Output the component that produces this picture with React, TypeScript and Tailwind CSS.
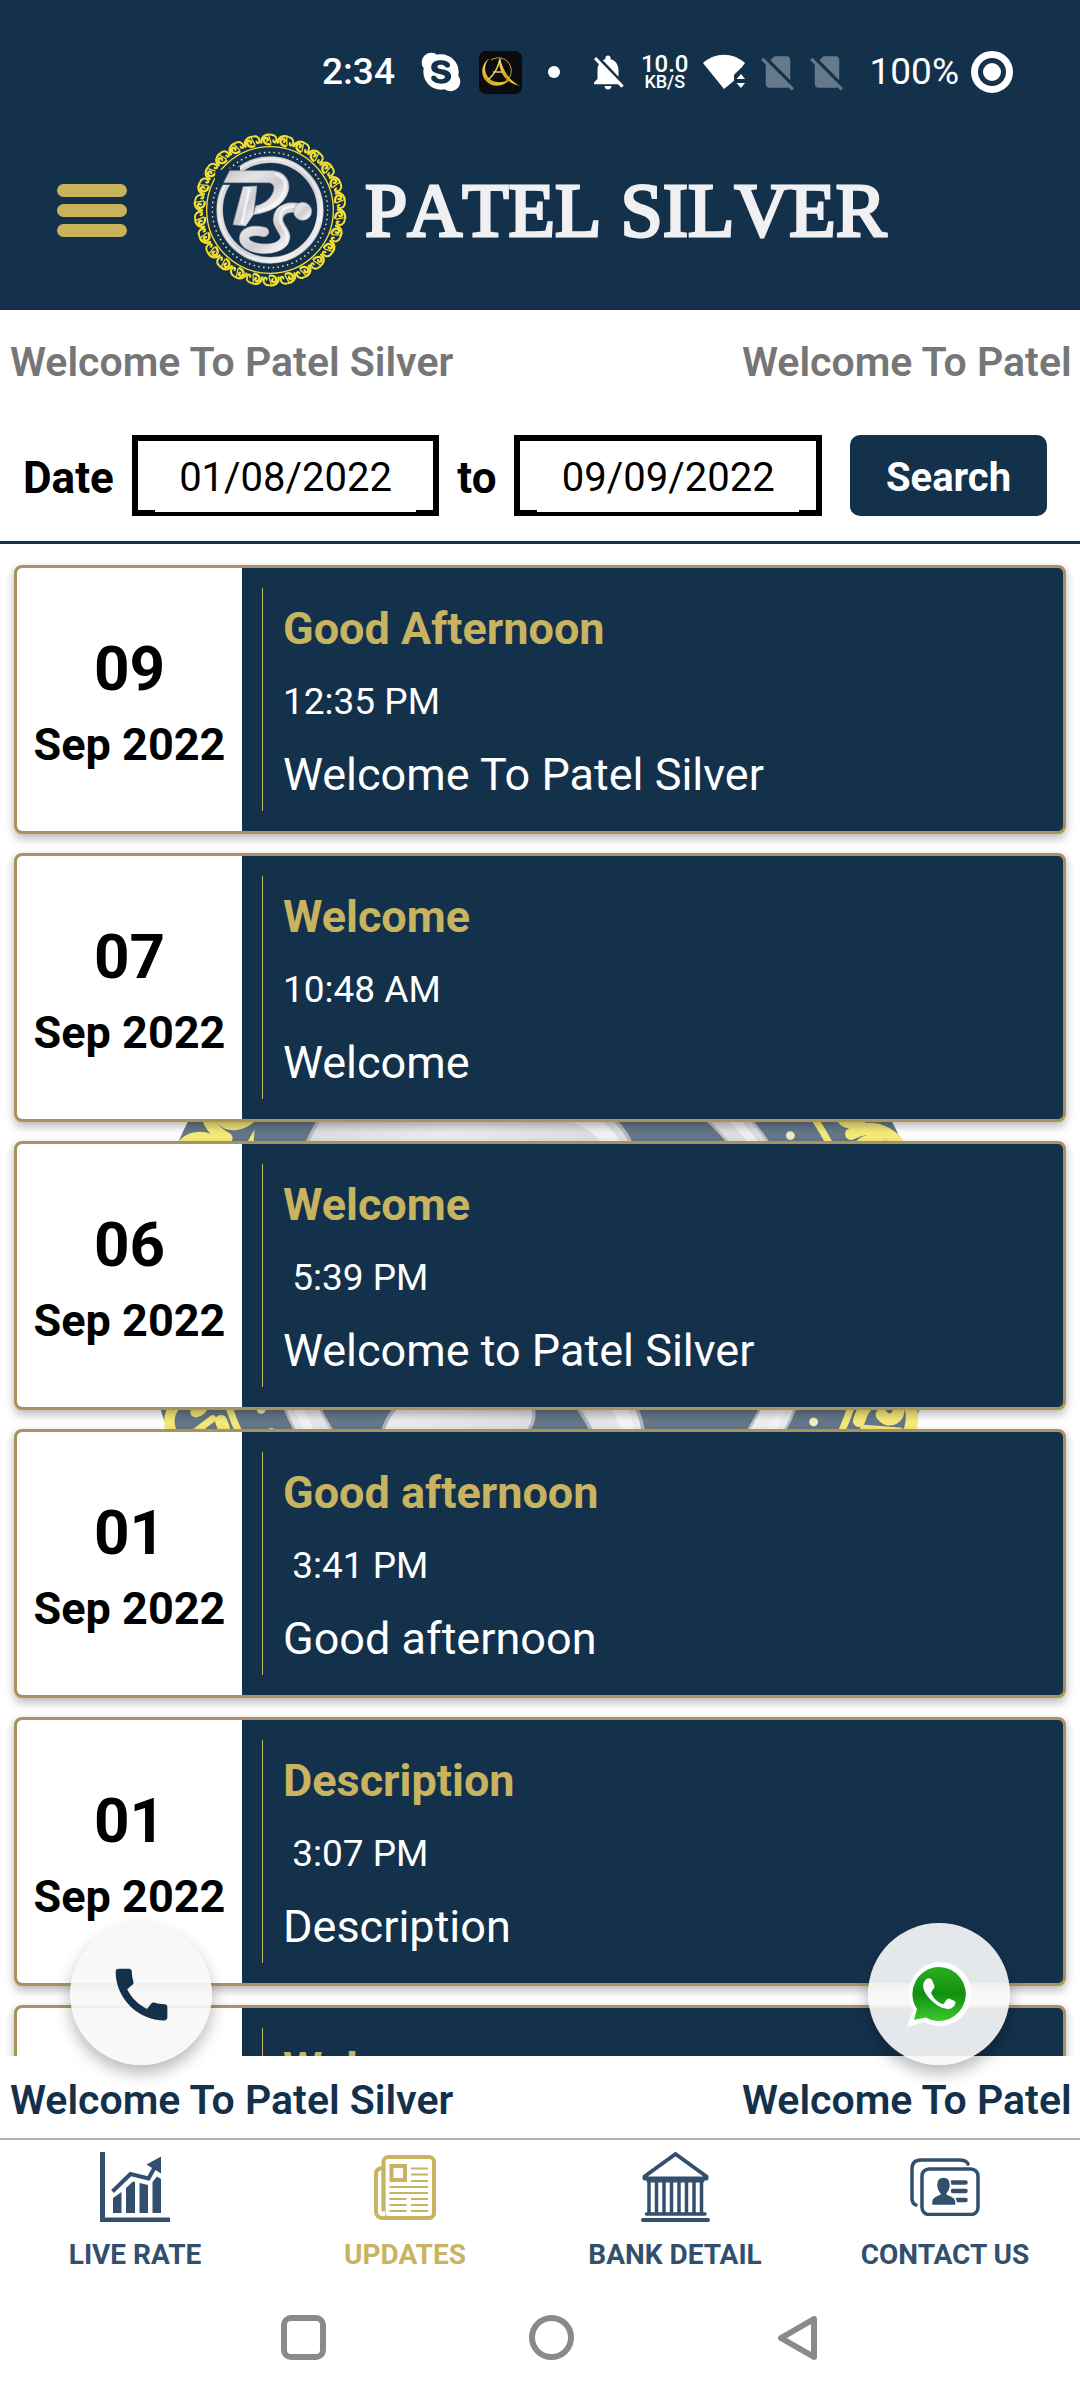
import { MdCall, MdNotificationsOff, MdSignalCellularNoSim } from "react-icons/md";
import { FaSkype } from "react-icons/fa";

type Update = { day: string; month: string; title: string; time: string; body: string };

const updates: Update[] = [
  { day: "09", month: "Sep 2022", title: "Good Afternoon", time: "12:35 PM", body: "Welcome To Patel Silver" },
  { day: "07", month: "Sep 2022", title: "Welcome", time: "10:48 AM", body: "Welcome" },
  { day: "06", month: "Sep 2022", title: "Welcome", time: " 5:39 PM", body: "Welcome to Patel Silver" },
  { day: "01", month: "Sep 2022", title: "Good afternoon", time: " 3:41 PM", body: "Good afternoon" },
  { day: "01", month: "Sep 2022", title: "Description", time: " 3:07 PM", body: "Description" },
  { day: "01", month: "Sep 2022", title: "Welcome", time: " 2:50 PM", body: "Welcome" },
];

function Emblem({ id, className }: { id: string; className: string }) {
  const turns = Array.from({ length: 26 }, (_, i) => (i * 360) / 26);
  const silver = `url(#${id}-silver)`;
  return (
    <svg viewBox="-231 -231 462 462" className={className} aria-hidden="true">
      <defs>
        <linearGradient id={`${id}-silver`} x1="0" y1="0" x2="1" y2="1">
          <stop offset="0" stopColor="#c4c4c8" />
          <stop offset="0.3" stopColor="#e4e4e7" />
          <stop offset="0.55" stopColor="#cdcdd1" />
          <stop offset="0.8" stopColor="#f1f1f3" />
          <stop offset="1" stopColor="#b4b4b9" />
        </linearGradient>
      </defs>
      <circle r="228" fill="#14314c" />
      <g fill="none" stroke="#f3df34" strokeLinecap="round">
        {turns.map((a) => (
          <g key={a} transform={`rotate(${a})`}>
            <path strokeWidth="7" d="M0 -197C-16 -196 -22 -207 -17 -214C-11 -220 -4 -214 -8 -208" />
            <path strokeWidth="7" d="M-26 -202C-28 -219 -14 -228 -1 -226" />
            <path strokeWidth="6" d="M4 -226C16 -226 22 -216 18 -206C14 -200 9 -204 10 -209" />
            <path strokeWidth="4" d="M-3 -221L3 -201" />
          </g>
        ))}
        <circle r="190" strokeWidth="4" />
      </g>
      <circle r="173" fill="none" stroke="#ebe3a4" strokeWidth="5" strokeLinecap="round" strokeDasharray="0.1 14.4" />
      <circle r="151" fill="none" stroke="#9b9da3" strokeWidth="20" />
      <circle r="151" fill="none" stroke={silver} strokeWidth="17" />
      <circle r="153" fill="none" stroke="#f2f2f4" strokeWidth="5" opacity="0.8" />
      <path fill="#14314c" d="M-164 -118L-90 -130L-90 -76L-166 -76Z" />
      <g fill={silver} stroke="#96989e" strokeWidth="2">
        <path d="M-121 -118H9C49 -114 62 -84 55 -56C43 -15 0 8 -50 14L-43 -12C-10 -20 10 -42 12 -65C12 -77 4 -82 -6 -82H-139Z" />
        <path d="M-81 -70L-39 -72L-50 14L-73 48L-111 44Z" />
      </g>
      <path fill="none" stroke="#f6f6f8" strokeWidth="9" strokeLinecap="round" opacity="0.8" d="M18 -108C44 -98 50 -80 44 -60C32 -26 4 -6 -34 3M-62 -64L-84 38" />
      <g fill="none" strokeLinecap="round">
        <path stroke="#8e9096" strokeWidth="31" d="M98 -2C62 -14 26 -6 24 28C24 54 56 68 42 94C20 126 -62 122 -76 92C-84 66 -54 58 -18 66" />
        <path stroke={silver} strokeWidth="27" d="M98 -2C62 -14 26 -6 24 28C24 54 56 68 42 94C20 126 -62 122 -76 92C-84 66 -54 58 -18 66" />
        <path stroke="#f6f6f8" strokeWidth="8" opacity="0.8" d="M80 -9C50 -14 31 -4 30 28C32 52 60 66 48 94" />
      </g>
      <circle cx="98" cy="4" r="27" fill={silver} stroke="#96989e" strokeWidth="2" />
    </svg>
  );
}

function StatusBar() {
  return (
    <div className="flex h-11 items-center justify-end pr-[67px] text-white">
      <span className="text-[37px] leading-[44px] font-medium">2:34</span>
      <FaSkype size={44} className="ml-6" />
      <svg viewBox="0 0 43 43" className="ml-4 size-[43px]" aria-hidden="true">
        <defs>
          <linearGradient id="gold" x1="0" y1="0" x2="1" y2="1">
            <stop offset="0" stopColor="#f5e27a" />
            <stop offset="0.5" stopColor="#d2a21c" />
            <stop offset="1" stopColor="#f8d840" />
          </linearGradient>
        </defs>
        <rect width="43" height="43" rx="7" fill="#0b0a0c" />
        <path fill="url(#gold)" d="M11 7C2 12 1 24 7 30C13 37 25 36 31 28C23 33 13 32 9 26C4 19 6 11 11 7Z" />
        <path fill="none" stroke="#c9a53a" strokeWidth="1" d="M12 9C20 4 30 8 32 17C33 24 30 28 27 30" />
        <path fill="none" stroke="#e5cf6a" strokeWidth="1.5" d="M21 8C19 17 15 24 9 29M14 21H25" />
        <path fill="url(#gold)" d="M21 7C24 20 30 29 41 35C30 33 21 25 20 11Z" />
      </svg>
      <span className="ml-[26px] size-3 rounded-full bg-white" />
      <MdNotificationsOff size={42} className="ml-[27px]" />
      <span className="ml-3 flex flex-col items-center font-medium">
        <span className="text-[24px] leading-[20px]">10.0</span>
        <span className="text-[18px] leading-[16px]">KB/S</span>
      </span>
      <svg viewBox="0 0 42 36" className="ml-[14px] h-9 w-[42px]" fill="#fff" aria-hidden="true">
        <path d="M0 9C12 -2 30 -2 42 9L36 17L32 20V26L21 35Z" />
        <path fill="#14314c" d="M38 14L31 21V36H42V14Z" />
        <path d="M38 20L42 25H33.500Z M33.500 29H42L38 34Z" />
      </svg>
      <MdSignalCellularNoSim size={42} className="ml-3 opacity-35" />
      <MdSignalCellularNoSim size={42} className="ml-[7px] opacity-35" />
      <span className="ml-[22px] text-[37px] leading-[44px]">100%</span>
      <svg viewBox="0 0 42 42" className="ml-3 size-[42px]" aria-hidden="true">
        <circle cx="21" cy="21" r="17.500" fill="none" stroke="#fff" strokeWidth="7" />
        <circle cx="21" cy="21" r="9" fill="#fff" />
      </svg>
    </div>
  );
}

function Ticker({ className }: { className: string }) {
  return (
    <div className={`flex shrink-0 items-center overflow-hidden pl-[10px] text-[41px] leading-[48px] font-semibold whitespace-nowrap ${className}`}>
      <span className="w-[732px] shrink-0">Welcome To Patel Silver</span>
      <span>Welcome To Patel Silver</span>
    </div>
  );
}

function DateField({ label, value }: { label: string; value: string }) {
  return (
    <div className="flex min-w-0 flex-1 border-[6px] border-black px-[17px]">
      <input
        aria-label={label}
        defaultValue={value}
        className="h-[69px] w-full min-w-0 bg-white pt-1 text-center text-[40px] text-black shadow-[0_2px_0_#fff] outline-none"
      />
    </div>
  );
}

function UpdateCard({ day, month, title, time, body }: Update) {
  return (
    <li className="flex shrink-0 overflow-hidden rounded-lg border-[3px] border-[#a8935c] bg-[#14314c] shadow-[0_4px_10px_rgba(0,0,0,0.3)]">
      <div className="flex w-[225px] shrink-0 flex-col items-center justify-center gap-1 bg-white pt-[14px] font-bold text-black">
        <span className="text-[62px] leading-[72px]">{day}</span>
        <span className="text-[45px] leading-[72px]">{month}</span>
      </div>
      <div className="my-5 ml-5 min-w-0 flex-1 border-l border-[#c8b560] pt-1 pl-5 leading-[73px] text-white">
        <h2 className="text-[45px] font-bold text-[#c8b361]">{title}</h2>
        <p className="text-[37px] whitespace-pre">{time}</p>
        <p className="text-[45px]">{body}</p>
      </div>
    </li>
  );
}

function LiveRateIcon() {
  return (
    <svg viewBox="0 0 70 70" className="size-[70px]" fill="currentColor" aria-hidden="true">
      <path d="M0 0H5V65.500H70V70H0Z" />
      <path d="M13 46L21.500 40V61H13ZM26 36L33 29.500L35 30V61H26ZM39.500 31L48 33V61H39.500ZM52.500 30L57 24.500L61 27V61H52.500Z" />
      <path fill="none" stroke="currentColor" strokeWidth="4" d="M12.500 39.500L30.500 22L48.500 26.500L56 13" />
      <path d="M61 4.500V21.500L46.500 12.500Z" />
    </svg>
  );
}

function UpdatesIcon() {
  return (
    <svg viewBox="0 0 62 65" className="h-[65px] w-[62px]" fill="none" stroke="currentColor" aria-hidden="true">
      <rect x="9.500" y="2" width="50.500" height="61" rx="5" strokeWidth="4" />
      <path strokeWidth="4" d="M9.500 13C5 13 2 15 2 19V57C2 61 5 63 9 63H20" />
      <path stroke="#fff" strokeWidth="4" d="M9 56V61" />
      <path strokeWidth="3.500" strokeLinecap="round" d="M9.500 12V55" />
      <path strokeWidth="4" d="M7 63H16" />
      <rect x="17.500" y="11" width="13.500" height="14" strokeWidth="4" />
      <path strokeWidth="2" d="M37 13.500H54M37 19.500H54M37 26H54M15.500 32H54M15.500 38H54M15.500 44H32.500M37 44H54M15.500 50H32.500M37 50H54M15.500 56H32.500M37 56H54" />
    </svg>
  );
}

function BankIcon() {
  const columns = [8, 15.5, 23, 30.5, 38, 45.5, 53, 60.5];
  return (
    <svg viewBox="0 0 69 70" className="h-[70px] w-[69px]" fill="none" stroke="currentColor" strokeLinecap="round" strokeLinejoin="round" aria-hidden="true">
      <path strokeWidth="4" d="M34.500 2L3.500 24.500V26.500H65.500V24.500Z" />
      <path strokeWidth="3" d="M7 29H62" />
      {columns.map((x) => (
        <path key={x} strokeWidth="3.500" strokeLinecap="butt" d={`M${x} 29V62`} />
      ))}
      <path strokeWidth="3.500" d="M5.500 62H64" />
      <path strokeWidth="4" d="M2 68H67" />
    </svg>
  );
}

function ContactIcon() {
  return (
    <svg viewBox="0 0 70 58" className="h-[58px] w-[70px]" fill="none" stroke="currentColor" strokeLinecap="round" aria-hidden="true">
      <path strokeWidth="3.500" d="M6 47C3 46 2 44 2 40V11C2 5 5 2 11 2H49C54 2 57 3 58 6" />
      <rect x="12" y="11" width="56" height="45.500" rx="7" strokeWidth="3.500" />
      <path strokeWidth="4.500" d="M42 24.500H55.500M43 33H55.500M47 42H55.500" />
      <path
        fill="currentColor"
        stroke="#fff"
        strokeWidth="1.500"
        d="M33.500 19C38 19 41 22 40.500 28C40 32 39 34 37 36C40 38 46 38 46 44V47.500H21.500V44C21.500 38 27 38 30 36C28 34 27 32 26.500 28C26 22 29 19 33.500 19Z"
      />
    </svg>
  );
}

function WhatsAppIcon() {
  return (
    <svg viewBox="0 0 64 66" className="h-[66px] w-16" aria-hidden="true">
      <defs>
        <linearGradient id="wa" x1="0" y1="0" x2="0" y2="1">
          <stop offset="0" stopColor="#2cae1f" />
          <stop offset="0.5" stopColor="#118f10" />
          <stop offset="1" stopColor="#3cc92c" />
        </linearGradient>
      </defs>
      <path fill="#fff" d="M32 1A32 32 0 1 1 17 61L0 66L6 49A32 32 0 0 1 32 1Z" />
      <path fill="url(#wa)" d="M32 6A27 27 0 1 1 18.500 56.500L7 59L10 48A27 27 0 0 1 32 6Z" />
      <path
        fill="#fff"
        d="M17 21C19 17 23 16 25 19L27.500 25C28 28 23 30 24.500 33C27 38 31 41.500 35 43C38 44 39 37 42 37.500L47.500 40C50 42 47 46 44 47.500C39 49 31 46 25 40C18 33 14.500 27 17 21Z"
      />
    </svg>
  );
}

const tabs = [
  { label: "LIVE RATE", Icon: LiveRateIcon, active: false },
  { label: "UPDATES", Icon: UpdatesIcon, active: true },
  { label: "BANK DETAIL", Icon: BankIcon, active: false },
  { label: "CONTACT US", Icon: ContactIcon, active: false },
];

const fab =
  "absolute -bottom-[9px] flex size-[142px] items-center justify-center rounded-full bg-[#f7f7f7]/92 shadow-[0_8px_16px_rgba(0,0,0,0.28)]";

export default function App() {
  return (
    <div className="flex h-screen flex-col overflow-hidden bg-white font-[Roboto,sans-serif]">
      <header className="shrink-0 bg-[#14314c] pt-[50px] pb-[23px]">
        <StatusBar />
        <div className="flex items-center pt-[39px] pl-[57px]">
          <button type="button" aria-label="Menu" className="flex w-[70px] flex-col gap-[7px]">
            <span className="h-[13px] rounded-full bg-[#c8b35c]" />
            <span className="h-[13px] rounded-full bg-[#c8b35c]" />
            <span className="h-[13px] rounded-full bg-[#c8b35c]" />
          </button>
          <Emblem id="brand" className="ml-[66px] size-[154px] shrink-0" />
          <h1 className="ml-[18px] font-['Liberation_Serif',serif] text-[76px] leading-[80px] whitespace-nowrap text-[#f0f0f2] [-webkit-text-stroke:3px_#f0f0f2] [font-kerning:none]">
            PATEL SILVER
          </h1>
        </div>
      </header>

      <Ticker className="h-[103px] text-[#767676]" />

      <form className="flex shrink-0 items-center gap-[18px] border-b-[3px] border-[#14314c] pt-[22px] pr-[33px] pb-[25px] pl-[23px]">
        <span className="pt-1 text-[44px] leading-[52px] font-bold text-black">Date</span>
        <DateField label="From date" value="01/08/2022" />
        <span className="pt-1 text-[44px] leading-[52px] font-bold text-black">to</span>
        <DateField label="To date" value="09/09/2022" />
        <button type="button" className="ml-[10px] h-[81px] w-[197px] shrink-0 rounded-[10px] bg-[#14314c] pt-1 text-[40px] font-bold text-white">
          Search
        </button>
      </form>

      <main className="relative min-h-0 flex-1">
        <div className="relative h-full overflow-hidden">
          <div className="absolute inset-0 flex items-center justify-center opacity-65">
            <Emblem id="mark" className="size-[800px] shrink-0" />
          </div>
          <ul className="relative flex flex-col gap-[19px] px-[14px] pt-[21px]">
            {updates.map((u, i) => (
              <UpdateCard key={i} {...u} />
            ))}
          </ul>
        </div>
        <a href="#call" aria-label="Call" className={`${fab} left-[70px] text-[#14314c]`}>
          <MdCall size={69} />
        </a>
        <a href="#whatsapp" aria-label="WhatsApp" className={`${fab} right-[70px]`}>
          <WhatsAppIcon />
        </a>
      </main>

      <Ticker className="h-[82px] pt-[6px] text-[#14314c]" />

      <nav className="grid shrink-0 grid-cols-4 border-t-2 border-[#b4b0b0] pt-3">
        {tabs.map(({ label, Icon, active }) => (
          <a
            key={label}
            href="#tab"
            aria-current={active ? "page" : undefined}
            className={`flex flex-col items-center gap-[15px] ${active ? "text-[#c8b361]" : "text-[#32506e]"}`}
          >
            <span className="flex h-[70px] items-center">
              <Icon />
            </span>
            <span className="text-[28px] leading-9 font-bold whitespace-nowrap">{label}</span>
          </a>
        ))}
      </nav>

      <div className="flex h-[127px] shrink-0 items-center justify-center gap-[203px] pt-[2px] pl-[18px]">
        <button type="button" aria-label="Recent apps" className="size-[45px] rounded-[10px] border-[6px] border-[#8a8a8a]" />
        <button type="button" aria-label="Home" className="size-[45px] rounded-full border-[6px] border-[#8a8a8a]" />
        <button type="button" aria-label="Back">
          <svg viewBox="0 0 41 46" className="h-[46px] w-[41px]" fill="none" stroke="#8a8a8a" strokeWidth="6" strokeLinejoin="round" aria-hidden="true">
            <path d="M37 4V42L4 23Z" />
          </svg>
        </button>
      </div>
    </div>
  );
}
